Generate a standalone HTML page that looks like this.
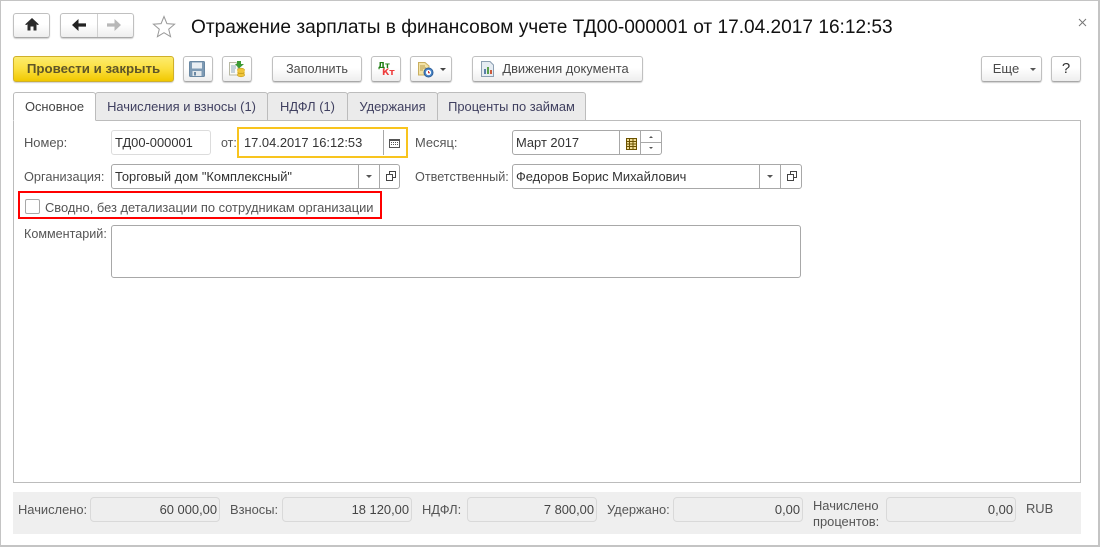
<!DOCTYPE html>
<html><head><meta charset="utf-8"><style>
*{box-sizing:border-box}
html,body{margin:0;padding:0;width:1101px;height:547px;overflow:hidden;background:#fff}
body{font:12.9px/14px "Liberation Sans",Arial,sans-serif;color:#4a4a4a;position:relative}
.a{position:absolute}
.frame{left:0;top:0;width:1100px;height:547px;border:2px solid #c4c4c4;border-width:1px 2px 2px 1px}
.btn{position:absolute;height:26px;border:1px solid #c0c0c0;border-bottom-color:#a8a8a8;border-radius:3px;background:linear-gradient(#fff 0,#fff 45%,#eee 100%);box-shadow:0 1px 1px #d0d0d0;text-align:center;line-height:24px;color:#4a4a4a}
.tab{position:absolute;top:92px;height:29px;background:#ebebeb;border:1px solid #bcbcbc;border-radius:3px 3px 0 0;text-align:center;line-height:28px;color:#404060;white-space:nowrap}
.lbl{position:absolute;white-space:nowrap;color:#555}
.inp{position:absolute;height:25px;border:1px solid #a8a8a8;border-radius:3px;background:#fff;line-height:23px;padding-left:3px;color:#333;white-space:nowrap}
.v{position:absolute;top:0;bottom:0;width:1px;background:#a8a8a8}
.ro{position:absolute;top:497px;width:130px;height:25px;background:#eeeeee;border:1px solid #d9d9d9;border-radius:4px;text-align:right;padding-right:2px;line-height:23px;color:#444}
</style></head><body>
<div class="a frame"></div>

<!-- header -->
<div class="btn" style="left:13px;top:13px;width:37px;height:25px"></div>
<svg class="a" style="left:24px;top:17px" width="16" height="15" viewBox="0 0 16 15"><path d="M8 1 L1 7.5 L2.5 8 L3.5 7.2V13.5H6.5V9.5H9.5V13.5H12.5V7.2L13.5 8 L15 7.5Z" fill="#2a2a2a"/></svg>
<div class="btn" style="left:60px;top:13px;width:74px;height:25px"></div>
<div class="a" style="left:97px;top:14px;width:1px;height:23px;background:#d0d0d0"></div>
<svg class="a" style="left:71px;top:18px" width="16" height="14" viewBox="0 0 16 14"><path d="M1 7L7.5 1V5.4H15V8.6H7.5V13Z" fill="#222"/></svg>
<svg class="a" style="left:106px;top:18px" width="16" height="14" viewBox="0 0 16 14"><path d="M15 7L8.5 1V5.4H1V8.6H8.5V13Z" fill="#b8b8b8"/></svg>
<svg class="a" style="left:152px;top:15px" width="24" height="23" viewBox="0 0 24 23"><path d="M12 1.5L14.9 8.6 22.6 9.2 16.7 14.2 18.6 21.7 12 17.7 5.4 21.7 7.3 14.2 1.4 9.2 9.1 8.6Z" fill="#fff" stroke="#999" stroke-width="1"/></svg>
<div class="a" style="left:191px;top:16px;font-size:19.1px;line-height:23px;color:#111;white-space:nowrap">Отражение зарплаты в финансовом учете ТД00-000001 от 17.04.2017 16:12:53</div>
<svg class="a" style="left:1078px;top:18px" width="9" height="9" viewBox="0 0 9 9"><path d="M1 1L8 8M8 1L1 8" stroke="#777" stroke-width="1"/></svg>

<!-- toolbar -->
<div class="btn" style="left:13px;top:56px;width:161px;background:linear-gradient(#fdec6e,#fbdf3e 50%,#f1c800);border-color:#cfb02a;font-weight:bold;font-size:13.3px;color:#5e5528">Провести и закрыть</div>
<div class="btn" style="left:183px;top:56px;width:30px"></div>
<svg class="a" style="left:189px;top:61px" width="16" height="16" viewBox="0 0 16 16"><rect x="0.5" y="0.5" width="15" height="15" rx="1" fill="#7d9ab4" stroke="#6a88a3"/><rect x="3" y="1.5" width="10" height="6" fill="#e9eef3"/><rect x="3.5" y="10" width="9" height="5" fill="#e3e8ec"/><rect x="5" y="11" width="2" height="3.5" fill="#6a88a3"/></svg>
<div class="btn" style="left:222px;top:56px;width:30px"></div>
<svg class="a" style="left:228px;top:60px" width="18" height="18" viewBox="0 0 18 18"><path d="M1.5 2.5H8L10 4.5V15H1.5Z" fill="#fbfbf5" stroke="#b9b9a4"/><path d="M3 6H8M3 8H8M3 10H7M3 12H7" stroke="#8fa8bf"/><path d="M9 1H13V4H16L11 8.5 7 4H9Z" fill="#3d9a35"/><ellipse cx="13" cy="10" rx="3.6" ry="1.8" fill="#f0c53a" stroke="#c49a1a" stroke-width=".6"/><rect x="9.4" y="10" width="7.2" height="5" fill="#f0c53a"/><ellipse cx="13" cy="15" rx="3.6" ry="1.8" fill="#f0c53a" stroke="#c49a1a" stroke-width=".6"/><path d="M9.5 12.5Q13 14.5 16.5 12.5" stroke="#c49a1a" fill="none" stroke-width=".7"/></svg>
<div class="btn" style="left:272px;top:56px;width:90px;font-size:12.6px">Заполнить</div>
<div class="btn" style="left:371px;top:56px;width:30px"></div>
<div class="a" style="left:378px;top:61px;font:bold 8px/9px 'DejaVu Sans',sans-serif;color:#1e7d12">Дт</div>
<div class="a" style="left:382px;top:68px;font:bold 9px/10px 'DejaVu Sans',sans-serif;color:#ee3d3d">Кт</div>
<div class="btn" style="left:410px;top:56px;width:42px"></div>
<svg class="a" style="left:417px;top:61px" width="17" height="17" viewBox="0 0 17 17"><path d="M1.5 1.5H8L12 5V14H1.5Z" fill="#f3e3a6" stroke="#c9ae5f"/><path d="M3 5H8M3 7H9M3 9H6" stroke="#b89c4c"/><circle cx="11.5" cy="11.5" r="4.5" fill="#4a86c8" stroke="#2e5f99"/><circle cx="11.5" cy="11.5" r="2.6" fill="#fff"/><path d="M11.5 10V11.7H13" stroke="#c33" fill="none"/></svg>
<div class="a" style="left:440px;top:68px;border:3px solid transparent;border-top:3px solid #444;border-bottom:0"></div>
<div class="btn" style="left:472px;top:56px;width:171px;padding-left:16px">Движения документа</div>
<svg class="a" style="left:481px;top:61px" width="13" height="16" viewBox="0 0 13 16"><path d="M.5 .5H9L12.5 4V15.5H.5Z" fill="#e6ecf2" stroke="#8c9fb2"/><rect x="3" y="8" width="2" height="5" fill="#5b7fa8"/><rect x="6" y="6" width="2" height="7" fill="#5aa04c"/><rect x="9" y="9" width="2" height="4" fill="#cc5a3c"/></svg>
<div class="btn" style="left:981px;top:56px;width:61px;padding-right:11px;font-size:13px">Еще</div>
<div class="a" style="left:1030px;top:68px;border:3px solid transparent;border-top:3px solid #555;border-bottom:0"></div>
<div class="btn" style="left:1051px;top:56px;width:30px;font-size:15px;color:#333">?</div>

<!-- tabs + panel -->
<div class="a" style="left:13px;top:120px;width:1068px;height:363px;border:1px solid #bcbcbc;background:#fff"></div>
<div class="tab" style="left:95px;width:173px">Начисления и взносы (1)</div>
<div class="tab" style="left:267px;width:81px">НДФЛ (1)</div>
<div class="tab" style="left:347px;width:91px">Удержания</div>
<div class="tab" style="left:437px;width:149px">Проценты по займам</div>
<div class="tab" style="left:13px;width:83px;background:#fff;border-bottom:1px solid #fff;color:#444">Основное</div>

<!-- row 1 -->
<div class="lbl" style="left:24px;top:136px">Номер:</div>
<div class="inp" style="left:111px;top:130px;width:100px;border-color:#dcdcdc">ТД00-000001</div>
<div class="lbl" style="left:221px;top:136px;font-size:12.5px">от:</div>
<div class="a" style="left:237px;top:127px;width:171px;height:31px;border:2px solid #f8c41e"></div>
<div class="a" style="left:244px;top:136px;color:#333;white-space:nowrap">17.04.2017 16:12:53</div>
<div class="a" style="left:383px;top:130px;width:1px;height:25px;background:#a8a8a8"></div>
<svg class="a" style="left:389px;top:139px" width="11" height="9" viewBox="0 0 11 9"><rect x=".5" y=".5" width="10" height="8" fill="#fff" stroke="#555"/><rect x=".5" y=".5" width="10" height="1.5" fill="#555"/><path d="M2 3.5H3M4 3.5H5M6 3.5H7M8 3.5H9M2 5.5H3M4 5.5H5M6 5.5H7M8 5.5H9" stroke="#555"/></svg>
<div class="lbl" style="left:415px;top:136px">Месяц:</div>
<div class="inp" style="left:512px;top:130px;width:150px">Март 2017
  <div class="v" style="left:106px"></div><div class="v" style="left:127px"></div>
  <div class="a" style="left:127px;top:11px;width:21px;height:1px;background:#a8a8a8"></div>
</div>
<svg class="a" style="left:626px;top:138px" width="11" height="12" viewBox="0 0 11 12"><rect x=".5" y=".5" width="10" height="11" fill="#f1dd98" stroke="#6b5200"/><path d="M.5 3.5H10.5M.5 6H10.5M.5 8.5H10.5M3.5 .5V11.5M7 .5V11.5" stroke="#6b5200"/></svg>
<div class="a" style="left:649px;top:136px;border:2px solid transparent;border-bottom:2px solid #555;border-top:0"></div>
<div class="a" style="left:649px;top:147px;border:2px solid transparent;border-top:2px solid #555;border-bottom:0"></div>

<!-- row 2 -->
<div class="lbl" style="left:24px;top:170px;font-size:12.75px">Организация:</div>
<div class="inp" style="left:111px;top:164px;width:289px">Торговый дом "Комплексный"
  <div class="v" style="left:246px"></div><div class="v" style="left:267px"></div>
</div>
<div class="a" style="left:366px;top:175px;border:3px solid transparent;border-top:3px solid #555;border-bottom:0"></div>
<svg class="a" style="left:386px;top:171px" width="11" height="11" viewBox="0 0 11 11"><path d="M3.5 3V.5H9.5V6.5H7M.5 3.5H6.5V9.5H.5Z" fill="none" stroke="#444"/></svg>
<div class="lbl" style="left:415px;top:170px;font-size:12.65px">Ответственный:</div>
<div class="inp" style="left:512px;top:164px;width:290px">Федоров Борис Михайлович
  <div class="v" style="left:246px"></div><div class="v" style="left:267px"></div>
</div>
<div class="a" style="left:767px;top:175px;border:3px solid transparent;border-top:3px solid #555;border-bottom:0"></div>
<svg class="a" style="left:787px;top:171px" width="11" height="11" viewBox="0 0 11 11"><path d="M3.5 3V.5H9.5V6.5H7M.5 3.5H6.5V9.5H.5Z" fill="none" stroke="#444"/></svg>

<!-- checkbox -->
<div class="a" style="left:18px;top:191px;width:364px;height:28px;border:2px solid #f00"></div>
<div class="a" style="left:25px;top:199px;width:15px;height:15px;border:1px solid #a8a8a8;border-radius:2px"></div>
<div class="lbl" style="left:45px;top:201px">Сводно, без детализации по сотрудникам организации</div>

<!-- comment -->
<div class="lbl" style="left:24px;top:227px;font-size:12.6px">Комментарий:</div>
<div class="inp" style="left:111px;top:225px;width:690px;height:53px"></div>

<!-- footer -->
<div class="a" style="left:13px;top:492px;width:1068px;height:42px;background:#efefef"></div>
<div class="lbl" style="left:18px;top:503px">Начислено:</div>
<div class="ro" style="left:90px">60 000,00</div>
<div class="lbl" style="left:230px;top:503px">Взносы:</div>
<div class="ro" style="left:282px">18 120,00</div>
<div class="lbl" style="left:422px;top:503px">НДФЛ:</div>
<div class="ro" style="left:467px">7 800,00</div>
<div class="lbl" style="left:607px;top:503px">Удержано:</div>
<div class="ro" style="left:673px">0,00</div>
<div class="lbl" style="left:813px;top:498px;line-height:16px">Начислено<br>процентов:</div>
<div class="ro" style="left:886px">0,00</div>
<div class="lbl" style="left:1026px;top:502px">RUB</div>
</body></html>
